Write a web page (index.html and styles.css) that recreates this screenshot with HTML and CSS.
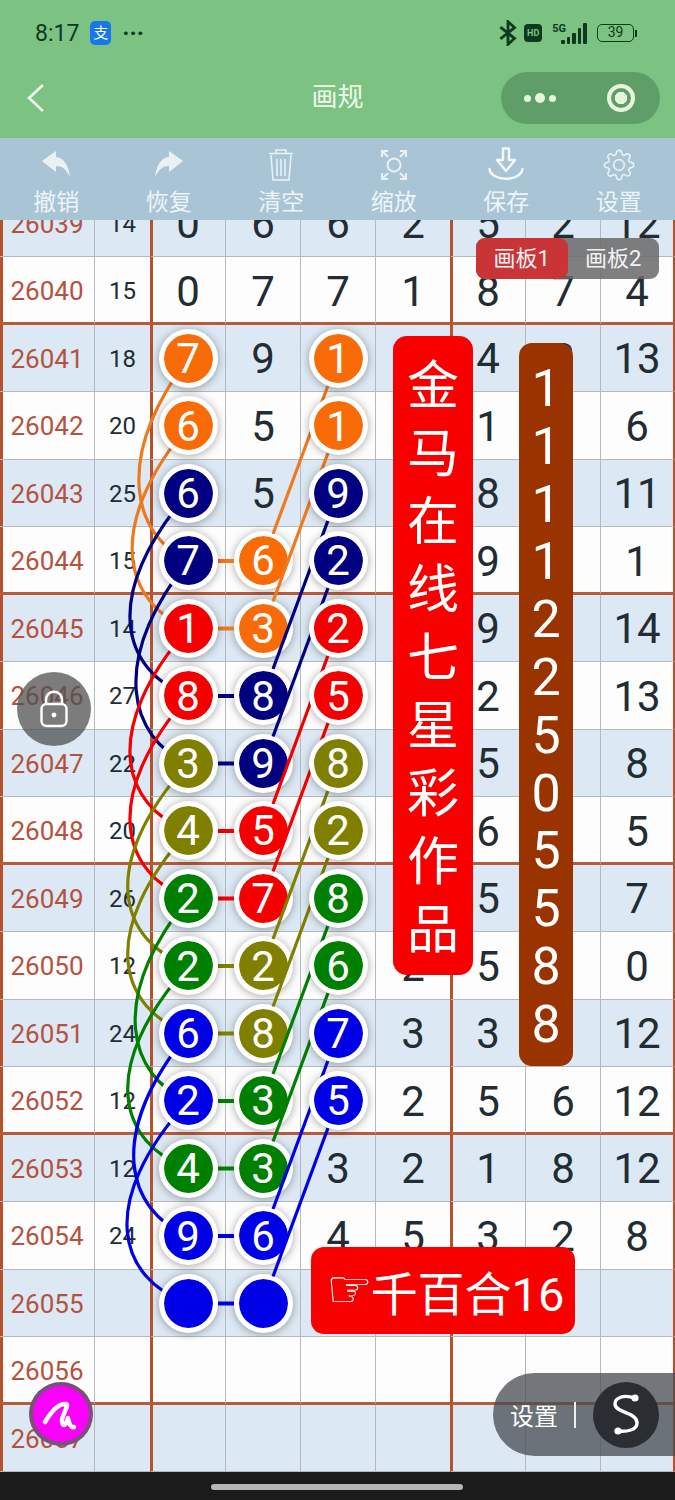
FILE: index.html
```html
<!DOCTYPE html>
<html lang="zh-CN">
<head>
    <meta charset="UTF-8">
    <meta name="viewport" content="width=device-width, initial-scale=1.0">
    <title>画规</title>
    <link rel="stylesheet" href="styles.css">
</head>
<body>
    <header class="top">
        <div class="status">
            <div class="status-left">
                <span class="clock">8:17</span>
                <span class="alipay">支</span>
                <span class="more">···</span>
            </div>
            <div class="status-right">
                <svg class="bt" width="20" height="26" viewBox="0 0 18 24"><path d="M2 6.5 L15 17 L9 22.5 V1.5 L15 7 L2 17.5" fill="none" stroke="#0d3a1d" stroke-width="2.6"/></svg>
                <span class="hd">HD</span>
                <span class="net">5G</span>
                <span class="bars"><i class="b1"></i><i class="b2"></i><i class="b3"></i><i class="b4"></i><i class="b5"></i></span>
                <span class="battery">39</span><span class="nub"></span>
            </div>
        </div>
        <div class="nav">
            <svg class="back" width="20" height="32" viewBox="0 0 20 32"><path d="M17 3 L3 16 L17 29" fill="none" stroke="#eefbe9" stroke-width="2.6"/></svg>
            <div class="title">画规</div>
            <div class="capsule">
                <span class="dots"><i></i><i class="big"></i><i></i></span>
                <span class="target"></span>
            </div>
        </div>
    </header>

    <nav class="tools">
        <div class="tool">
            <svg width="40" height="36" viewBox="0 0 40 36"><path d="M6 14 L20 4 V10 C28 10 33 20 34 30 C30 22 26 19 20 19 V25 Z" fill="#e9f1f5"/></svg>
            <span>撤销</span>
        </div>
        <div class="tool">
            <svg width="40" height="36" viewBox="0 0 40 36"><path d="M34 14 L20 4 V10 C12 10 7 20 6 30 C10 22 14 19 20 19 V25 Z" fill="#e9f1f5"/></svg>
            <span>恢复</span>
        </div>
        <div class="tool">
            <svg width="40" height="36" viewBox="0 0 40 36" fill="none" stroke="#e9f1f5" stroke-width="1.6"><path d="M8 6.5 H32 M15 6 V3 H25 V6 M10 8 L12 33 H28 L30 8 M16 12 V29 M20 12 V29 M24 12 V29"/></svg>
            <span>清空</span>
        </div>
        <div class="tool">
            <svg width="40" height="36" viewBox="0 0 40 36" fill="none" stroke="#e9f1f5" stroke-width="2"><circle cx="20" cy="18" r="6.5"/><path d="M8 10 V4 H14 M8 4 L14 10 M32 10 V4 H26 M32 4 L26 10 M8 26 V32 H14 M8 32 L14 26 M32 26 V32 H26 M32 32 L26 26"/></svg>
            <span>缩放</span>
        </div>
        <div class="tool">
            <svg width="40" height="36" viewBox="0 0 40 36" fill="none" stroke="#f2f7f9" stroke-width="2.4" stroke-linejoin="round"><path d="M17 1.5 H23 V13 H29 L20 24 L11 13 H17 Z"/><path d="M3.5 22 C5 35 35 35 36.5 22" stroke-linecap="round"/></svg>
            <span>保存</span>
        </div>
        <div class="tool">
            <svg width="40" height="36" viewBox="-2 -1.5 28 27" fill="none" stroke="#e9f1f5" stroke-width="1.2"><circle cx="12" cy="12" r="4"/><path d="M19.4 15a1.65 1.65 0 0 0 .33 1.82l.06.06a2 2 0 0 1 0 2.83 2 2 0 0 1-2.83 0l-.06-.06a1.65 1.65 0 0 0-1.82-.33 1.65 1.65 0 0 0-1 1.51V21a2 2 0 0 1-2 2 2 2 0 0 1-2-2v-.09A1.65 1.65 0 0 0 9 19.4a1.65 1.65 0 0 0-1.82.33l-.06.06a2 2 0 0 1-2.83 0 2 2 0 0 1 0-2.83l.06-.06a1.65 1.65 0 0 0 .33-1.82 1.65 1.65 0 0 0-1.51-1H3a2 2 0 0 1-2-2 2 2 0 0 1 2-2h.09A1.65 1.65 0 0 0 4.6 9a1.65 1.65 0 0 0-.33-1.82l-.06-.06a2 2 0 0 1 0-2.83 2 2 0 0 1 2.83 0l.06.06a1.65 1.65 0 0 0 1.82.33H9a1.65 1.65 0 0 0 1-1.51V3a2 2 0 0 1 2-2 2 2 0 0 1 2 2v.09a1.65 1.65 0 0 0 1 1.51 1.65 1.65 0 0 0 1.82-.33l.06-.06a2 2 0 0 1 2.83 0 2 2 0 0 1 0 2.83l-.06.06a1.65 1.65 0 0 0-.33 1.82V9a1.65 1.65 0 0 0 1.51 1H21a2 2 0 0 1 2 2 2 2 0 0 1-2 2h-.09a1.65 1.65 0 0 0-1.51 1z"/></svg>
            <span>设置</span>
        </div>
    </nav>

    <main class="stage">
        <div class="board">
            <div class="row"><div class="cell id">26039</div><div class="cell qty">14</div><div class="cell thick">0</div><div class="cell">6</div><div class="cell">6</div><div class="cell">2</div><div class="cell thick">5</div><div class="cell">2</div><div class="cell">12</div></div>
            <div class="row sep"><div class="cell id">26040</div><div class="cell qty">15</div><div class="cell thick">0</div><div class="cell">7</div><div class="cell">7</div><div class="cell">1</div><div class="cell thick">8</div><div class="cell">7</div><div class="cell">4</div></div>
            <div class="row"><div class="cell id">26041</div><div class="cell qty">18</div><div class="cell thick"><b class="ball over orange">7</b></div><div class="cell">9</div><div class="cell"><b class="ball over orange">1</b></div><div class="cell"></div><div class="cell thick">4</div><div class="cell">8</div><div class="cell">13</div></div>
            <div class="row"><div class="cell id">26042</div><div class="cell qty">20</div><div class="cell thick"><b class="ball over orange">6</b></div><div class="cell">5</div><div class="cell"><b class="ball over orange">1</b></div><div class="cell"></div><div class="cell thick">1</div><div class="cell"></div><div class="cell">6</div></div>
            <div class="row"><div class="cell id">26043</div><div class="cell qty">25</div><div class="cell thick"><b class="ball over navy">6</b></div><div class="cell">5</div><div class="cell"><b class="ball over navy">9</b></div><div class="cell"></div><div class="cell thick">8</div><div class="cell"></div><div class="cell">11</div></div>
            <div class="row sep"><div class="cell id">26044</div><div class="cell qty">15</div><div class="cell thick"><b class="ball over navy">7</b></div><div class="cell"><b class="ball orange">6</b></div><div class="cell"><b class="ball over navy">2</b></div><div class="cell"></div><div class="cell thick">9</div><div class="cell"></div><div class="cell">1</div></div>
            <div class="row"><div class="cell id">26045</div><div class="cell qty">14</div><div class="cell thick"><b class="ball over red">1</b></div><div class="cell"><b class="ball orange">3</b></div><div class="cell"><b class="ball over red">2</b></div><div class="cell"></div><div class="cell thick">9</div><div class="cell">3</div><div class="cell">14</div></div>
            <div class="row"><div class="cell id">26046</div><div class="cell qty">27</div><div class="cell thick"><b class="ball over red">8</b></div><div class="cell"><b class="ball navy">8</b></div><div class="cell"><b class="ball over red">5</b></div><div class="cell"></div><div class="cell thick">2</div><div class="cell"></div><div class="cell">13</div></div>
            <div class="row"><div class="cell id">26047</div><div class="cell qty">22</div><div class="cell thick"><b class="ball over olive">3</b></div><div class="cell"><b class="ball navy">9</b></div><div class="cell"><b class="ball over olive">8</b></div><div class="cell"></div><div class="cell thick">5</div><div class="cell">9</div><div class="cell">8</div></div>
            <div class="row sep"><div class="cell id">26048</div><div class="cell qty">20</div><div class="cell thick"><b class="ball over olive">4</b></div><div class="cell"><b class="ball red">5</b></div><div class="cell"><b class="ball over olive">2</b></div><div class="cell"></div><div class="cell thick">6</div><div class="cell"></div><div class="cell">5</div></div>
            <div class="row"><div class="cell id">26049</div><div class="cell qty">26</div><div class="cell thick"><b class="ball over green">2</b></div><div class="cell"><b class="ball red">7</b></div><div class="cell"><b class="ball over green">8</b></div><div class="cell"></div><div class="cell thick">5</div><div class="cell">9</div><div class="cell">7</div></div>
            <div class="row"><div class="cell id">26050</div><div class="cell qty">12</div><div class="cell thick"><b class="ball over green">2</b></div><div class="cell"><b class="ball olive">2</b></div><div class="cell"><b class="ball over green">6</b></div><div class="cell">2</div><div class="cell thick">5</div><div class="cell">3</div><div class="cell">0</div></div>
            <div class="row"><div class="cell id">26051</div><div class="cell qty">24</div><div class="cell thick"><b class="ball over blue">6</b></div><div class="cell"><b class="ball olive">8</b></div><div class="cell"><b class="ball over blue">7</b></div><div class="cell">3</div><div class="cell thick">3</div><div class="cell">9</div><div class="cell">12</div></div>
            <div class="row sep"><div class="cell id">26052</div><div class="cell qty">12</div><div class="cell thick"><b class="ball over blue">2</b></div><div class="cell"><b class="ball green">3</b></div><div class="cell"><b class="ball over blue">5</b></div><div class="cell">2</div><div class="cell thick">5</div><div class="cell">6</div><div class="cell">12</div></div>
            <div class="row"><div class="cell id">26053</div><div class="cell qty">12</div><div class="cell thick"><b class="ball over green">4</b></div><div class="cell"><b class="ball green">3</b></div><div class="cell">3</div><div class="cell">2</div><div class="cell thick">1</div><div class="cell">8</div><div class="cell">12</div></div>
            <div class="row"><div class="cell id">26054</div><div class="cell qty">24</div><div class="cell thick"><b class="ball over blue">9</b></div><div class="cell"><b class="ball blue">6</b></div><div class="cell">4</div><div class="cell">5</div><div class="cell thick">3</div><div class="cell">2</div><div class="cell">8</div></div>
            <div class="row"><div class="cell id">26055</div><div class="cell qty"></div><div class="cell thick"><b class="ball over blue"></b></div><div class="cell"><b class="ball blue"></b></div><div class="cell"></div><div class="cell"></div><div class="cell thick"></div><div class="cell"></div><div class="cell"></div></div>
            <div class="row sep"><div class="cell id">26056</div><div class="cell qty"></div><div class="cell thick"></div><div class="cell"></div><div class="cell"></div><div class="cell"></div><div class="cell thick"></div><div class="cell"></div><div class="cell"></div></div>
            <div class="row"><div class="cell id">26057</div><div class="cell qty"></div><div class="cell thick"></div><div class="cell"></div><div class="cell"></div><div class="cell"></div><div class="cell thick"></div><div class="cell"></div><div class="cell"></div></div>

            <!-- viewBox uses page coordinates, board starts at y=189.5 -->
            <svg class="links" width="675" height="1282.5" viewBox="0 189.5 675 1282.5" fill="none" stroke-width="3.2">
                <g stroke="#ee7a20">
                    <path d="M188 358 C112 460 134 535 188 560.5"/>
                    <path d="M188 425.5 C103 527.5 125 602.5 188 628"/>
                    <path d="M338 358 L273 533.5"/>
                    <path d="M338 425.5 L273 601"/>
                    <path d="M218 560.5 H234 M218 628 H234" stroke-width="4"/>
                </g>
                <g stroke="#000080">
                    <path d="M188 493 C100 595 122 670 188 695.5"/>
                    <path d="M188 560.5 C108 662.5 130 737.5 188 763"/>
                    <path d="M338 493 L273 668.5"/>
                    <path d="M338 560.5 L273 736"/>
                    <path d="M218 695.5 H234 M218 763 H234" stroke-width="4"/>
                </g>
                <g stroke="#f40000">
                    <path d="M188 628 C100 730 122 805 188 830.5"/>
                    <path d="M188 695.5 C100 797.5 122 872.5 188 898"/>
                    <path d="M338 628 L273 803.5"/>
                    <path d="M338 695.5 L273 871"/>
                    <path d="M218 830.5 H234 M218 898 H234" stroke-width="4"/>
                </g>
                <g stroke="#808000">
                    <path d="M188 763 C97 865 119 940 188 965.5"/>
                    <path d="M188 830.5 C97 932.5 119 1007.5 188 1033"/>
                    <path d="M338 763 L273 938.5"/>
                    <path d="M338 830.5 L273 1006"/>
                    <path d="M218 965.5 H234 M218 1033 H234" stroke-width="4"/>
                </g>
                <g stroke="#008000">
                    <path d="M188 898 C107 1000 129 1075 188 1100.5"/>
                    <path d="M188 965.5 C97 1067.5 119 1142.5 188 1168"/>
                    <path d="M338 898 L273 1073.5"/>
                    <path d="M338 965.5 L273 1141"/>
                    <path d="M218 1100.5 H234 M218 1168 H234" stroke-width="4"/>
                </g>
                <g stroke="#0000e6">
                    <path d="M188 1033 C105 1135 127 1210 188 1235.5"/>
                    <path d="M188 1100.5 C96 1202.5 118 1277.5 188 1303"/>
                    <path d="M338 1033 L273 1208.5"/>
                    <path d="M338 1100.5 L273 1276"/>
                    <path d="M218 1235.5 H234 M218 1303 H234" stroke-width="4"/>
                </g>
            </svg>
        </div>

        <div class="tabs"><span class="tab on">画板1</span><span class="tab">画板2</span></div>
        <div class="banner title-banner">金马在线七星彩作品</div>
        <div class="banner code-banner">111122505588</div>
        <div class="banner tip-banner"><span class="hand">☞</span>千百合16</div>

        <div class="lock">
            <svg width="32" height="38" viewBox="0 0 32 38" fill="none" stroke="#fff" stroke-width="2.4"><path d="M8 14 V10 C8 -1 24 -1 24 10 V14"/><rect x="3.5" y="14" width="25" height="22" rx="5"/><circle cx="16" cy="25" r="2.4" fill="#fff" stroke="none"/></svg>
        </div>
        <div class="pen">
            <svg width="56" height="56" viewBox="0 0 56 56" fill="none" stroke="#fff" stroke-width="4.5" stroke-linecap="round" stroke-linejoin="round"><path d="M12 36 C18 26 26 17 33 18 C37 19 28 30 29 36 C30 42 34 38 35 32 C36 38 38 42 41 41"/></svg>
        </div>
        <div class="float-set">
            <span class="float-label">设置</span>
            <span class="float-line"></span>
            <span class="float-logo">
                <svg width="66" height="66" viewBox="0 0 66 66" fill="none" stroke="#fff" stroke-width="3.4"><path d="M42 16 C30 12 22 16 22 22 C22 31 44 30 44 41 C44 48 34 50 25 49"/><circle cx="42" cy="16" r="3.6" fill="#fff" stroke="none"/><circle cx="25" cy="49" r="3.6" fill="#fff" stroke="none"/></svg>
            </span>
        </div>
    </main>

    <footer class="home"><span class="home-bar"></span></footer>
</body>
</html>
```

FILE: styles.css
```css
* {
    box-sizing: border-box;
}
body {
    margin: 0;
    width: 675px;
    height: 1500px;
    overflow: hidden;
    font-family: Roboto, "Noto Sans CJK SC", sans-serif;
    display: flex;
    flex-direction: column;
    background: #1b1b1b;
}

/* green header */
.top {
    height: 138px;
    background: #7cc283;
    color: #0d3a1d;
}
.status {
    height: 66px;
    padding: 0 38px 0 35px;
    display: flex;
    justify-content: space-between;
    align-items: center;
}
.status-left, .status-right {
    display: flex;
    align-items: center;
}
.clock {
    font-size: 23px;
}
.alipay {
    width: 21px;
    height: 24px;
    margin-left: 11px;
    border-radius: 5px;
    background: #1677ee;
    color: #fff;
    font-size: 15px;
    line-height: 24px;
    text-align: center;
}
.more {
    margin-left: 11px;
    font-size: 24px;
    line-height: 24px;
    font-weight: 700;
}
.hd {
    width: 18px;
    height: 18px;
    margin-left: 6px;
    border-radius: 4px;
    background: #0d3a1d;
    color: #7cc283;
    font-size: 9px;
    font-weight: 700;
    line-height: 18px;
    text-align: center;
}
.net {
    margin: -9px 0 0 10px;
    font-size: 11px;
    font-weight: 700;
}
.bars {
    display: flex;
    align-items: flex-end;
    gap: 2px;
    height: 21px;
    margin-left: -5px;
}
.bars i {
    width: 3.6px;
    background: #0d3a1d;
    border-radius: 1px;
}
.bars .b1 { height: 4px; }
.bars .b2 { height: 7px; }
.bars .b3 { height: 11px; }
.bars .b4 { height: 16px; }
.bars .b5 { height: 21px; }
.battery {
    width: 37px;
    height: 18px;
    margin-left: 10px;
    border: 1.6px solid #0d3a1d;
    border-radius: 5px;
    font-size: 14px;
    line-height: 15px;
    text-align: center;
}
.nub {
    width: 2px;
    height: 7px;
    margin-left: 1px;
    background: #0d3a1d;
}
.nav {
    height: 72px;
    padding: 6px 15px 14px;
    display: grid;
    grid-template-columns: 1fr auto 1fr;
    align-items: center;
}
.back {
    margin-left: 11px;
}
.title {
    font-size: 26px;
    line-height: 30px;
    margin-top: -2px;
    color: #eefbe9;
}
.capsule {
    justify-self: end;
    width: 159px;
    height: 52px;
    border-radius: 26px;
    background: #5f9e69;
    display: flex;
    align-items: center;
    justify-content: space-between;
    padding: 0 25px 0 23px;
}
.dots {
    display: flex;
    align-items: center;
    gap: 4px;
}
.dots i {
    width: 7px;
    height: 7px;
    border-radius: 50%;
    background: #e6f5de;
}
.dots .big {
    width: 10px;
    height: 10px;
}
.target {
    width: 28px;
    height: 28px;
    border: 4px solid #e6f5de;
    border-radius: 50%;
    background: radial-gradient(circle, #e6f5de 0 6px, transparent 6.5px);
}

/* tool bar */
.tools {
    height: 82px;
    background: #a9c5d5;
    display: grid;
    grid-template-columns: repeat(6, 112.5px);
    position: relative;
    z-index: 5;
}
.tool {
    display: flex;
    flex-direction: column;
    align-items: center;
    padding-top: 9px;
    color: #eef4f7;
    font-size: 23px;
    line-height: 30px;
}
.tool svg {
    display: block;
    margin-bottom: 5px;
}

/* table */
.stage {
    position: relative;
    height: 1252px;
    overflow: hidden;
}
.board {
    position: relative;
    margin-top: -30.5px;
    display: grid;
    grid-template-rows: repeat(19, 67.5px);
}
.row {
    display: grid;
    grid-template-columns: 95px 56px repeat(6, 75px) 74px;
    background: #fdfdfd;
}
.row:nth-child(odd) {
    background: #dce8f3;
}
.cell {
    display: flex;
    align-items: center;
    justify-content: center;
    padding-top: 2px;
    border-right: 1px solid #b4b9bd;
    border-bottom: 1px solid #b4b9bd;
    font-size: 42px;
    color: #222c33;
}
.sep .cell {
    padding-top: 4px;
    border-bottom: 3px solid #b95a3a;
}
.thick {
    box-shadow: -1px 0 #b5522b, inset 2px 0 #b5522b;
}
.cell:last-child {
    border-right: 2px solid #b5522b;
}
.id {
    font-size: 26px;
    color: #b5523f;
    box-shadow: inset 3px 0 #b5522b;
}
.qty {
    font-size: 24px;
}
.ball {
    width: 59px;
    height: 59px;
    border: 5px solid #fff;
    border-radius: 50%;
    background-clip: padding-box;
    box-shadow: 0 1px 8px rgba(0, 0, 0, 0.35);
    display: flex;
    align-items: center;
    justify-content: center;
    flex: none;
    margin-top: -1px;
    padding-top: 1px;
    color: #fff;
    font-size: 42px;
    font-weight: 400;
}
.sep .ball {
    margin-top: -2px;
}
.ball.over {
    position: relative;
    z-index: 2;
}
.orange { background-color: #f96b07; }
.navy { background-color: #000080; }
.red { background-color: #f40000; }
.olive { background-color: #808000; }
.green { background-color: #008000; }
.blue { background-color: #0000e6; }
.links {
    position: absolute;
    left: 0;
    top: 0;
    z-index: 1;
}

/* things floating over the table */
.tabs {
    position: absolute;
    left: 476px;
    top: 18px;
    z-index: 3;
    display: flex;
    border-radius: 9px;
    overflow: hidden;
    background: rgba(105, 105, 105, 0.85);
}
.tab {
    width: 91.5px;
    height: 41px;
    color: #f2f2f2;
    font-size: 22px;
    line-height: 41px;
    text-align: center;
}
.tab.on {
    background: #c93537;
    border-radius: 0 9px 9px 0;
}
.banner {
    position: absolute;
    z-index: 3;
    color: #fff;
}
.title-banner {
    left: 393px;
    top: 116px;
    width: 80px;
    height: 639px;
    padding: 17px 14px 0;
    background: #f80000;
    border-radius: 14px;
    font-size: 52px;
    line-height: 68px;
    text-align: center;
}
.code-banner {
    left: 519px;
    top: 123px;
    width: 54px;
    height: 723px;
    padding-top: 17px;
    background: #993300;
    border-radius: 13px;
    font-size: 52px;
    line-height: 57.8px;
    text-align: center;
    word-break: break-all;
}
.tip-banner {
    left: 311px;
    top: 1027px;
    width: 264px;
    height: 87px;
    padding-left: 15px;
    background: #f80000;
    border-radius: 13px;
    font-size: 47px;
    display: flex;
    align-items: center;
}
.hand {
    font-family: "DejaVu Sans", sans-serif;
    font-size: 52px;
    line-height: 52px;
    margin: -4px -2px 0 0;
}
.lock {
    position: absolute;
    left: 17px;
    top: 452px;
    z-index: 3;
    width: 74px;
    height: 74px;
    border-radius: 50%;
    background: rgba(80, 80, 80, 0.75);
    display: flex;
    align-items: center;
    justify-content: center;
}
.pen {
    position: absolute;
    left: 29px;
    top: 1162px;
    z-index: 3;
    width: 64px;
    height: 64px;
    border: 4px solid rgba(95, 95, 95, 0.85);
    border-radius: 50%;
    background: #fb00fb;
}
.float-set {
    position: absolute;
    left: 493px;
    top: 1153px;
    z-index: 3;
    width: 182px;
    height: 83px;
    border-radius: 42px 0 0 42px;
    background: rgba(70, 75, 80, 0.75);
    display: flex;
    align-items: center;
    padding-left: 17px;
}
.float-label {
    color: #fff;
    font-size: 24px;
}
.float-line {
    width: 2px;
    height: 26px;
    margin-left: 16px;
    background: #eee;
}
.float-logo {
    width: 66px;
    height: 66px;
    margin-left: 17px;
    border-radius: 50%;
    background: #2a2e33;
}
.float-logo svg {
    display: block;
}

/* system bar */
.home {
    height: 28px;
    padding-top: 12px;
    background: #1b1b1b;
    display: flex;
    justify-content: center;
    align-items: flex-start;
}
.home-bar {
    width: 252px;
    height: 6px;
    margin-right: 2px;
    border-radius: 3px;
    background: #b5b5b5;
}
```
